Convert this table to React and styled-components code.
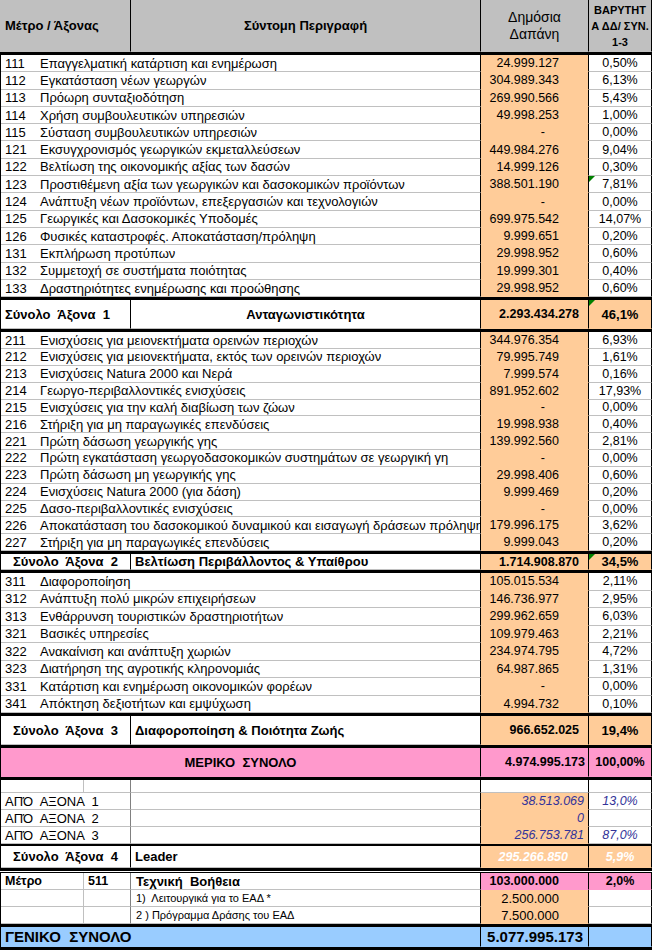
import React from 'react';
import styled, { createGlobalStyle, css } from 'styled-components';

const PEACH = '#ffcc99';
const PINK = '#ff99cc';
const BLUE = '#99ccff';
const GRID = '#c0c0c0';
const NAVY = '#333399';

const GlobalStyle = createGlobalStyle`
  html, body {
    margin: 0;
    padding: 0;
    background: #fff;
  }
  body {
    font-family: "Liberation Sans", Arial, sans-serif;
    color: #000;
  }
`;

const Sheet = styled.div`
  width: 652px;
  display: flex;
  flex-direction: column;
`;

const Row = styled.div`
  display: grid;
  grid-template-columns: 83px 47px 350px 108px 63px;
  height: ${(p) => p.$h}px;
  border-left: 1px solid ${(p) => p.$edge || '#000'};
  background: ${(p) => p.$bg || '#fff'};
`;

const Rule = styled.div`
  height: ${(p) => p.$h || 3}px;
  background: #000;
`;

const DoubleRule = styled.div`
  height: 5px;
  box-sizing: border-box;
  border-top: 3px solid #000;
  border-bottom: 1px solid #000;
`;

const Cell = styled.div`
  grid-column: span ${(p) => p.$span || 1};
  position: relative;
  display: flex;
  align-items: center;
  justify-content: ${(p) =>
    p.$align === 'right' ? 'flex-end' : p.$align === 'center' ? 'center' : 'flex-start'};
  text-align: ${(p) => p.$align || 'left'};
  padding: 0 ${(p) => p.$pr ?? 4}px 0 ${(p) => p.$pl ?? 4}px;
  box-sizing: border-box;
  min-width: 0;
  overflow: hidden;
  white-space: pre;
  line-height: ${(p) => (p.$lh ? `${p.$lh}px` : 'normal')};
  background: ${(p) => p.$bg || 'transparent'};
  border-right: 1px solid ${(p) => p.$div || '#000'};
  border-bottom: 1px solid ${(p) => p.$line || p.$bg || GRID};
  font-size: ${(p) => p.$size || 13}px;
  font-weight: ${(p) => (p.$bold ? 700 : 400)};
  font-style: ${(p) => (p.$italic ? 'italic' : 'normal')};
  color: ${(p) => p.$color || '#000'};

  ${(p) =>
    p.$flag &&
    css`
      &::before {
        content: '';
        position: absolute;
        left: 0;
        top: 0;
        border-top: 6px solid #008000;
        border-right: 6px solid transparent;
      }
    `}
`;

const Code = styled.span`
  display: inline-block;
  width: 35px;
  flex-shrink: 0;
`;

const axis1 = [
  ['111', 'Επαγγελματική κατάρτιση και ενημέρωση', '24.999.127', '0,50%'],
  ['112', 'Εγκατάσταση νέων γεωργών', '304.989.343', '6,13%'],
  ['113', 'Πρόωρη συνταξιοδότηση', '269.990.566', '5,43%'],
  ['114', 'Χρήση συμβουλευτικών υπηρεσιών', '49.998.253', '1,00%'],
  ['115', 'Σύσταση συμβουλευτικών υπηρεσιών', '-', '0,00%'],
  ['121', 'Εκσυγχρονισμός γεωργικών εκμεταλλεύσεων', '449.984.276', '9,04%'],
  ['122', 'Βελτίωση της οικονομικής αξίας των δασών', '14.999.126', '0,30%'],
  ['123', 'Προστιθέμενη αξία των γεωργικών και δασοκομικών προϊόντων', '388.501.190', '7,81%', true],
  ['124', 'Ανάπτυξη νέων προϊόντων, επεξεργασιών και τεχνολογιών', '-', '0,00%'],
  ['125', 'Γεωργικές και Δασοκομικές Υποδομές', '699.975.542', '14,07%'],
  ['126', 'Φυσικές καταστροφές. Αποκατάσταση/πρόληψη', '9.999.651', '0,20%'],
  ['131', 'Εκπλήρωση προτύπων', '29.998.952', '0,60%'],
  ['132', 'Συμμετοχή σε συστήματα ποιότητας', '19.999.301', '0,40%'],
  ['133', 'Δραστηριότητες ενημέρωσης και προώθησης', '29.998.952', '0,60%'],
];

const axis2 = [
  ['211', 'Ενισχύσεις για μειονεκτήματα ορεινών περιοχών', '344.976.354', '6,93%'],
  ['212', 'Ενισχύσεις για μειονεκτήματα, εκτός των ορεινών περιοχών', '79.995.749', '1,61%'],
  ['213', 'Ενισχύσεις Natura 2000 και Νερά', '7.999.574', '0,16%'],
  ['214', 'Γεωργο-περιβαλλοντικές ενισχύσεις', '891.952.602', '17,93%'],
  ['215', 'Ενισχύσεις για την καλή διαβίωση των ζώων', '-', '0,00%'],
  ['216', 'Στήριξη για μη παραγωγικές επενδύσεις', '19.998.938', '0,40%'],
  ['221', 'Πρώτη δάσωση γεωργικής γης', '139.992.560', '2,81%'],
  ['222', 'Πρώτη εγκατάσταση γεωργοδασοκομικών συστημάτων σε γεωργική γη', '-', '0,00%'],
  ['223', 'Πρώτη δάσωση μη γεωργικής γης', '29.998.406', '0,60%'],
  ['224', 'Ενισχύσεις Natura 2000 (για δάση)', '9.999.469', '0,20%'],
  ['225', 'Δασο-περιβαλλοντικές ενισχύσεις', '-', '0,00%'],
  ['226', 'Αποκατάσταση του δασοκομικού δυναμικού και εισαγωγή δράσεων πρόληψης', '179.996.175', '3,62%'],
  ['227', 'Στήριξη για μη παραγωγικές επενδύσεις', '9.999.043', '0,20%'],
];

const axis3 = [
  ['311', 'Διαφοροποίηση', '105.015.534', '2,11%'],
  ['312', 'Ανάπτυξη πολύ μικρών επιχειρήσεων', '146.736.977', '2,95%'],
  ['313', 'Ενθάρρυνση τουριστικών δραστηριοτήτων', '299.962.659', '6,03%'],
  ['321', 'Βασικές υπηρεσίες', '109.979.463', '2,21%'],
  ['322', 'Ανακαίνιση και ανάπτυξη χωριών', '234.974.795', '4,72%'],
  ['323', 'Διατήρηση της αγροτικής κληρονομιάς', '64.987.865', '1,31%'],
  ['331', 'Κατάρτιση και ενημέρωση οικονομικών φορέων', '-', '0,00%'],
  ['341', 'Απόκτηση δεξιοτήτων και εμψύχωση', '4.994.732', '0,10%'],
];

const fromAxes = [
  ['ΑΠΌ  ΑΞΟΝΑ  1', '38.513.069', '13,0%'],
  ['ΑΠΌ  ΑΞΟΝΑ  2', '0', ''],
  ['ΑΠΌ  ΑΞΟΝΑ  3', '256.753.781', '87,0%'],
];

function MeasureRow({ row, h }) {
  const [code, text, amount, share, flag] = row;
  return (
    <Row $h={h}>
      <Cell $span={3}>
        <Code>{code}</Code>
        {text}
      </Cell>
      <Cell $bg={PEACH} $align="right" $pr={amount === '-' ? 43 : 29} $size={12.5}>
        {amount}
      </Cell>
      <Cell $align="center" $pl={0} $pr={0} $size={12.5} $flag={flag}>
        {share}
      </Cell>
    </Row>
  );
}

function AxisTotal({ h, label, title, centerLabel, centerTitle, amount, share, flag }) {
  return (
    <Row $h={h}>
      <Cell $span={2} $bold $align={centerLabel ? 'center' : 'left'}>
        {label}
      </Cell>
      <Cell $bold $align={centerTitle ? 'center' : 'left'}>
        {title}
      </Cell>
      <Cell $bg={PEACH} $bold $align="right" $pr={9} $size={12.5}>
        {amount}
      </Cell>
      <Cell $bg={PEACH} $bold $align="center" $pl={0} $pr={0} $flag={flag}>
        {share}
      </Cell>
    </Row>
  );
}

export default function App() {
  return (
    <>
      <GlobalStyle />
      <Sheet>
        <Row $h={52} $bg="#c0c0c0" $edge="#c0c0c0">
          <Cell $span={2} $bold>
            Μέτρο / Άξονας
          </Cell>
          <Cell $bold $align="center">
            Σύντομη Περιγραφή
          </Cell>
          <Cell $align="center" $size={14} $lh={17}>
            {'Δημόσια\nΔαπάνη'}
          </Cell>
          <Cell $align="center" $bold $size={11} $lh={16} $pl={0} $pr={0}>
            {'ΒΑΡΥΤΗΤ\nΑ ΔΔ/ ΣΥΝ.\n1-3'}
          </Cell>
        </Row>
        <Rule />

        {axis1.map((r) => (
          <MeasureRow key={r[0]} row={r} h={17.3} />
        ))}
        <Rule />
        <AxisTotal
          h={29}
          label="Σύνολο  Άξονα  1"
          title="Ανταγωνιστικότητα"
          centerTitle
          amount="2.293.434.278"
          share="46,1%"
          flag
        />
        <Rule />

        {axis2.map((r) => (
          <MeasureRow key={r[0]} row={r} h={16.85} />
        ))}
        <Rule />
        <AxisTotal
          h={16}
          label="Σύνολο  Άξονα  2"
          title="Βελτίωση Περιβάλλοντος & Υπαίθρου"
          centerLabel
          amount="1.714.908.870"
          share="34,5%"
          flag
        />
        <Rule />

        {axis3.map((r) => (
          <MeasureRow key={r[0]} row={r} h={17.5} />
        ))}
        <Rule />
        <AxisTotal
          h={29}
          label="Σύνολο  Άξονα  3"
          title="Διαφοροποίηση & Ποιότητα Ζωής"
          centerLabel
          amount="966.652.025"
          share="19,4%"
        />
        <Rule />

        <Row $h={29} $bg={PINK}>
          <Cell $span={3} $bold $align="center" $bg={PINK}>
            ΜΕΡΙΚΟ  ΣΥΝΟΛΟ
          </Cell>
          <Cell $bg={PINK} $bold $align="right" $pr={3} $size={12.5}>
            4.974.995.173
          </Cell>
          <Cell $bg={PINK} $bold $align="center" $pl={0} $pr={0} $size={12.5}>
            100,00%
          </Cell>
        </Row>
        <Rule />

        <Row $h={13}>
          <Cell $div={GRID} />
          <Cell $div="#808080" />
          <Cell />
          <Cell />
          <Cell />
        </Row>
        {fromAxes.map(([label, amount, share]) => (
          <Row key={label} $h={17}>
            <Cell $span={2} $div="#808080">
              {label}
            </Cell>
            <Cell />
            <Cell $bg={PEACH} $italic $color={NAVY} $align="right" $pr={4} $size={12.5}>
              {amount}
            </Cell>
            <Cell $italic $color={NAVY} $align="center" $pl={0} $pr={0} $size={12.5}>
              {share}
            </Cell>
          </Row>
        ))}
        <Rule $h={2} />
        <Row $h={22}>
          <Cell $span={2} $bold $align="center">
            Σύνολο  Άξονα  4
          </Cell>
          <Cell $bold>Leader</Cell>
          <Cell $bg={PEACH} $bold $italic $color="#fff" $align="right" $pr={20} $size={12.5}>
            295.266.850
          </Cell>
          <Cell $bg={PEACH} $bold $italic $color="#fff" $align="center" $pl={0} $pr={0} $size={12.5}>
            5,9%
          </Cell>
        </Row>
        <DoubleRule />

        <Row $h={17}>
          <Cell $div={GRID} $bold $size={12.5}>
            Μέτρο
          </Cell>
          <Cell $div="#808080" $bold $size={12.5}>
            511
          </Cell>
          <Cell $bold $pl={5}>
            Τεχνική  Βοήθεια
          </Cell>
          <Cell $bg={PINK} $bold $align="right" $pr={29} $size={12.5}>
            103.000.000
          </Cell>
          <Cell $bg={PINK} $bold $align="center" $pl={0} $pr={0} $size={12.5}>
            2,0%
          </Cell>
        </Row>
        {['1)  Λειτουργικά για το ΕΑΔ *', '2 ) Πρόγραμμα Δράσης του ΕΑΔ'].map((t, i) => (
          <Row key={t} $h={17}>
            <Cell $div={GRID} />
            <Cell $div="#808080" />
            <Cell $size={11} $pl={5}>
              {t}
            </Cell>
            <Cell $bg={PEACH} $align="right" $pr={29}>
              {i === 0 ? '2.500.000' : '7.500.000'}
            </Cell>
            <Cell />
          </Row>
        ))}
        <Rule />

        <Row $h={20} $bg={BLUE}>
          <Cell $span={3} $bg={BLUE} $bold $size={15}>
            ΓΕΝΙΚΟ  ΣΥΝΟΛΟ
          </Cell>
          <Cell $bg={BLUE} $bold $align="right" $pr={5} $size={15}>
            5.077.995.173
          </Cell>
          <Cell $bg={BLUE} />
        </Row>
        <Rule />
      </Sheet>
    </>
  );
}
